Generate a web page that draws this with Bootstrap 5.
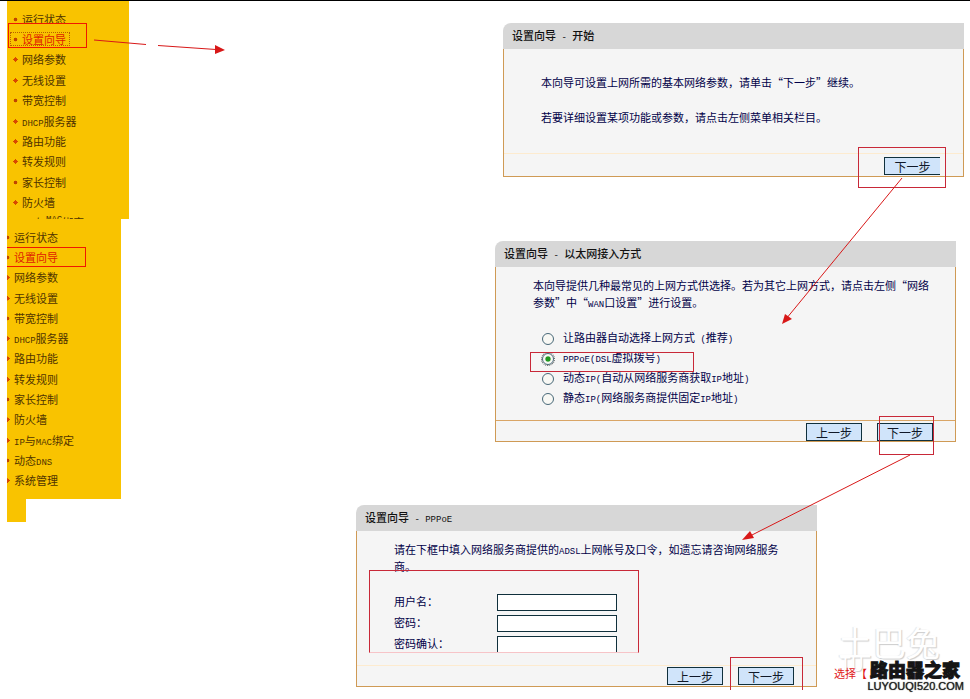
<!DOCTYPE html>
<html lang="zh-CN">
<head>
<meta charset="utf-8">
<meta name="viewport" content="width=device-width, initial-scale=1">
<title>设置向导</title>
<link href="https://cdn.jsdelivr.net/npm/bootstrap@5.3.0/dist/css/bootstrap.min.css" rel="stylesheet">
<style>
body { font: 11px/17px "Noto Sans CJK SC", "Liberation Sans", sans-serif; color: #000048; background: #fff; border-top: 1px solid #000; }
.half { font: 9px/9px "Liberation Mono", monospace; white-space: pre; }
/* sidebar */
.side { margin-left: 7px; width: 122px; }
.side ul { background: #f9c300; display: grid; grid-auto-rows: 1fr; }
.side a { color: #503400; text-decoration: none; }
.side .current a { color: #e02000; }
.menu-a { padding: 8px 0 6px 5px; min-height: 218px; position: relative; }
.menu-b { margin-right: 8px; padding: 8px 0 8px 7px; min-height: 280px; position: relative; }
.side li { display: flex; align-items: center; position: relative; }
.menu-a li { gap: 4px; margin-left: 1px; }
.plus { width: 5px; height: 5px; flex: none; background: linear-gradient(#d84800, #d84800) center/5px 1px no-repeat, linear-gradient(#d84800, #d84800) center/1px 5px no-repeat, radial-gradient(#d84800 40%, transparent 50%); }
.plus.dot { background: radial-gradient(#c04400 45%, transparent 60%); }
.menu-b .plus { position: absolute; left: -9px; clip-path: inset(0 0 0 2px); }
.menu-a .current::before, .menu-b .current::before { content: ""; position: absolute; border: 1px solid #f01800; }
.menu-a .current::before { left: -5px; top: -6px; width: 79px; height: 25px; background: #f9c300; }
.menu-b .current::before { left: -7px; top: 0; width: 79px; height: 20px; border-left: 0; }
.menu-a .current > * { position: relative; }
.menu-a .current::after { content: ""; position: absolute; left: -3px; top: 3px; width: 60px; height: 14px; border: 1px dotted #b86000; }
.menu-a .cut { position: absolute; left: 27px; bottom: 0; height: 3px; overflow: hidden; color: #503400; line-height: 12px; align-items: flex-start; gap: 0; }
.tail { width: 19px; height: 23px; background: #f9c300; }
/* wizard panels */
.panel { width: 100%; max-width: 461px; position: relative; }
.panel header { background: #d7d7d7; color: #111; border-radius: 8px 0 0 0; padding: 4px 9px 5px; }
.panel h2 { font-size: 11px; line-height: 17px; margin: 0; }
.inside { background: #f5f5f5; border: 1px solid #cf9a55; border-top: 0; }
.copy { padding: 10px 20px 0 37px; }
.bar { border-top: 1px solid #fdebcf; padding: 1px 22px 1px 0; gap: 15px; }
.bar.strong { border-color: #d9a566; }
.step { width: 56px; height: 18px; padding: 0; border: 1px solid #10303c; background: #d0e4fa; color: #101828; font-size: 12px; line-height: 15px; position: relative; }
.ring { position: absolute; border: 1px solid #c82838; pointer-events: none; }
.arrow { position: absolute; overflow: visible; pointer-events: none; z-index: 3; }
.start { margin: 22px 6px 0 0; }
.access { margin: 64px 14px 0 0; }
.login { margin: 63px 153px 0 0; }
.start .copy { padding-top: 25px; padding-bottom: 27px; }
.start .copy p + p { margin-top: 18px; }
.start .bar { padding: 3px 23px 1px 0; }
.start .step { border-right: 0; }
.access .copy { padding-bottom: 14px; }
.access .bar { padding-top: 2px; padding-bottom: 0; }
.choice { display: grid; gap: 3px; margin: 18px 0 0 9px; }
.choice div { display: flex; align-items: center; gap: 9px; position: relative; }
.choice input { appearance: none; width: 12px; height: 12px; margin: 3px 0 0; border: 1px solid #486878; border-radius: 50%; background: #f8f8f4; }
.choice input:checked { background: radial-gradient(#209820 30%, #f8f8f4 45%); outline: 1px dotted #555; }
.choice .ring { left: -12px; top: 3px; width: 164px; height: 20px; }
.fields { display: grid; grid-template-columns: 103px 120px; row-gap: 3px; margin-top: 18px; padding-bottom: 12px; position: relative; }
.fields input { width: 100%; height: 17px; border: 1px solid #10303c; background: #fff; padding: 0 3px; min-width: 0; margin-top: 1px; }
.fields .ring { left: -25px; top: -23px; width: 270px; height: 83px; border-bottom-color: #f7c4c8; }
.around-a { left: -27px; top: -11px; width: 88px; height: 41px; }
.around-b { left: 1px; top: -8px; width: 55px; height: 39px; }
.around-c { left: -9px; top: -11px; width: 73px; height: 33px; border-bottom: 0; }
/* site mark */
.site { position: absolute; right: 6px; bottom: -6px; width: 130px; text-align: right; }
.ghost { color: #fff; text-shadow: 1px 1px 1px #ccc, -1px 0 1px #e4e4e4; font-size: 34px; line-height: 34px; text-align: left; padding-left: 4px; }
.ghost-low { color: #fff; text-shadow: 1px 1px 1px #ccc; font-size: 18px; line-height: 20px; left: 6px; top: 28px; position: absolute; }
.pick { position: absolute; left: 0; top: 40px; color: #e01818; white-space: nowrap; }
.brand { color: #151515; font-size: 18px; line-height: 20px; font-weight: 900; padding-right: 4px; position: relative; -webkit-text-stroke: 1px #151515; }
.domain { color: #222; font: 11px/14px "Liberation Sans", sans-serif; text-shadow: 0 0 1px #222; position: relative; }
</style>
<script src="https://cdn.jsdelivr.net/npm/bootstrap@5.3.0/dist/js/bootstrap.bundle.min.js"></script>
</head>
<body class="min-vh-100">
<div class="d-flex position-relative">
  <nav class="side flex-shrink-0" aria-label="菜单">
    <ul class="menu-a list-unstyled mb-0">
      <li><i class="plus dot"></i><a href="#">运行状态</a></li>
      <li class="current"><i class="plus dot"></i><a href="#">设置向导</a></li>
      <li><i class="plus"></i><a href="#">网络参数</a></li>
      <li><i class="plus"></i><a href="#">无线设置</a></li>
      <li><i class="plus dot"></i><a href="#">带宽控制</a></li>
      <li><i class="plus"></i><a href="#"><span class="half">DHCP</span>服务器</a></li>
      <li><i class="plus"></i><a href="#">路由功能</a></li>
      <li><i class="plus"></i><a href="#">转发规则</a></li>
      <li><i class="plus dot"></i><a href="#">家长控制</a></li>
      <li><i class="plus"></i><a href="#">防火墙</a></li>
      <li class="cut">与<span class="half">MAC</span>绑定</li>
    </ul>
    <ul class="menu-b list-unstyled mb-0">
      <li><i class="plus dot"></i><a href="#">运行状态</a></li>
      <li class="current"><i class="plus dot"></i><a href="#">设置向导</a></li>
      <li><i class="plus"></i><a href="#">网络参数</a></li>
      <li><i class="plus"></i><a href="#">无线设置</a></li>
      <li><i class="plus dot"></i><a href="#">带宽控制</a></li>
      <li><i class="plus"></i><a href="#"><span class="half">DHCP</span>服务器</a></li>
      <li><i class="plus"></i><a href="#">路由功能</a></li>
      <li><i class="plus"></i><a href="#">转发规则</a></li>
      <li><i class="plus dot"></i><a href="#">家长控制</a></li>
      <li><i class="plus"></i><a href="#">防火墙</a></li>
      <li><i class="plus"></i><a href="#"><span class="half">IP</span>与<span class="half">MAC</span>绑定</a></li>
      <li><i class="plus dot"></i><a href="#">动态<span class="half">DNS</span></a></li>
      <li><i class="plus"></i><a href="#">系统管理</a></li>
    </ul>
    <div class="tail"></div>
  </nav>
  <svg class="arrow" style="left:94px;top:38px" width="132" height="16" aria-hidden="true"><path d="M0 1L52 5.500M64 6.500L122 10.500" stroke="#d81818"/><path d="M121 6l10 5-10 4z" fill="#d81818"/></svg>

  <main class="flex-fill d-flex flex-column align-items-end">
    <section class="panel start">
      <header><h2>设置向导<span class="half"> - </span>开始</h2></header>
      <div class="inside">
        <div class="copy">
          <p class="mb-0">本向导可设置上网所需的基本网络参数，请单击“下一步”继续。</p>
          <p class="mb-0">若要详细设置某项功能或参数，请点击左侧菜单相关栏目。</p>
        </div>
        <div class="bar d-flex justify-content-end">
          <button type="button" class="step">下一步<span class="ring around-a"></span></button>
        </div>
      </div>
      <svg class="arrow" style="right:62px;top:155px" width="120" height="147" aria-hidden="true"><path d="M120 0L4 141" stroke="#d81818"/><path d="M0 146l3-10 7 5z" fill="#d81818"/></svg>
    </section>

    <section class="panel access">
      <header><h2>设置向导<span class="half"> - </span>以太网接入方式</h2></header>
      <div class="inside">
        <div class="copy">
          <p class="mb-0">本向导提供几种最常见的上网方式供选择。若为其它上网方式，请点击左侧“网络参数”中“<span class="half">WAN</span>口设置”进行设置。</p>
          <div class="choice">
            <div><input type="radio" name="mode" id="m1"><label for="m1">让路由器自动选择上网方式<span class="half"> (</span>推荐<span class="half">)</span></label></div>
            <div><input type="radio" name="mode" id="m2" checked><label for="m2"><span class="half">PPPoE(DSL</span>虚拟拨号<span class="half">)</span></label><span class="ring"></span></div>
            <div><input type="radio" name="mode" id="m3"><label for="m3">动态<span class="half">IP(</span>自动从网络服务商获取<span class="half">IP</span>地址<span class="half">)</span></label></div>
            <div><input type="radio" name="mode" id="m4"><label for="m4">静态<span class="half">IP(</span>网络服务商提供固定<span class="half">IP</span>地址<span class="half">)</span></label></div>
          </div>
        </div>
        <div class="bar strong d-flex justify-content-end">
          <button type="button" class="step">上一步</button>
          <button type="button" class="step">下一步<span class="ring around-b"></span></button>
        </div>
      </div>
      <svg class="arrow" style="right:46px;top:214px" width="168" height="86" aria-hidden="true"><path d="M168 0L8 81" stroke="#d81818"/><path d="M0 85l8-9 4 7z" fill="#d81818"/></svg>
    </section>

    <section class="panel login">
      <header><h2>设置向导<span class="half"> - PPPoE</span></h2></header>
      <div class="inside">
        <div class="copy">
          <p class="mb-0">请在下框中填入网络服务商提供的<span class="half">ADSL</span>上网帐号及口令，如遗忘请咨询网络服务商。</p>
          <div class="fields">
            <label for="user">用户名：</label><input type="text" id="user">
            <label for="pass">密码：</label><input type="password" id="pass">
            <label for="again">密码确认：</label><input type="password" id="again">
            <span class="ring"></span>
          </div>
        </div>
        <div class="bar d-flex justify-content-end">
          <button type="button" class="step">上一步</button>
          <button type="button" class="step">下一步<span class="ring around-c"></span></button>
        </div>
      </div>
    </section>
  </main>
  <div class="site">
    <div class="ghost">土巴兔</div>
    <div class="ghost-low">TU</div>
    <div class="pick">选择【</div>
    <div class="brand">路由器之家</div>
    <div class="domain">LUYOUQI520.COM</div>
  </div>
</div>
</body>
</html>
